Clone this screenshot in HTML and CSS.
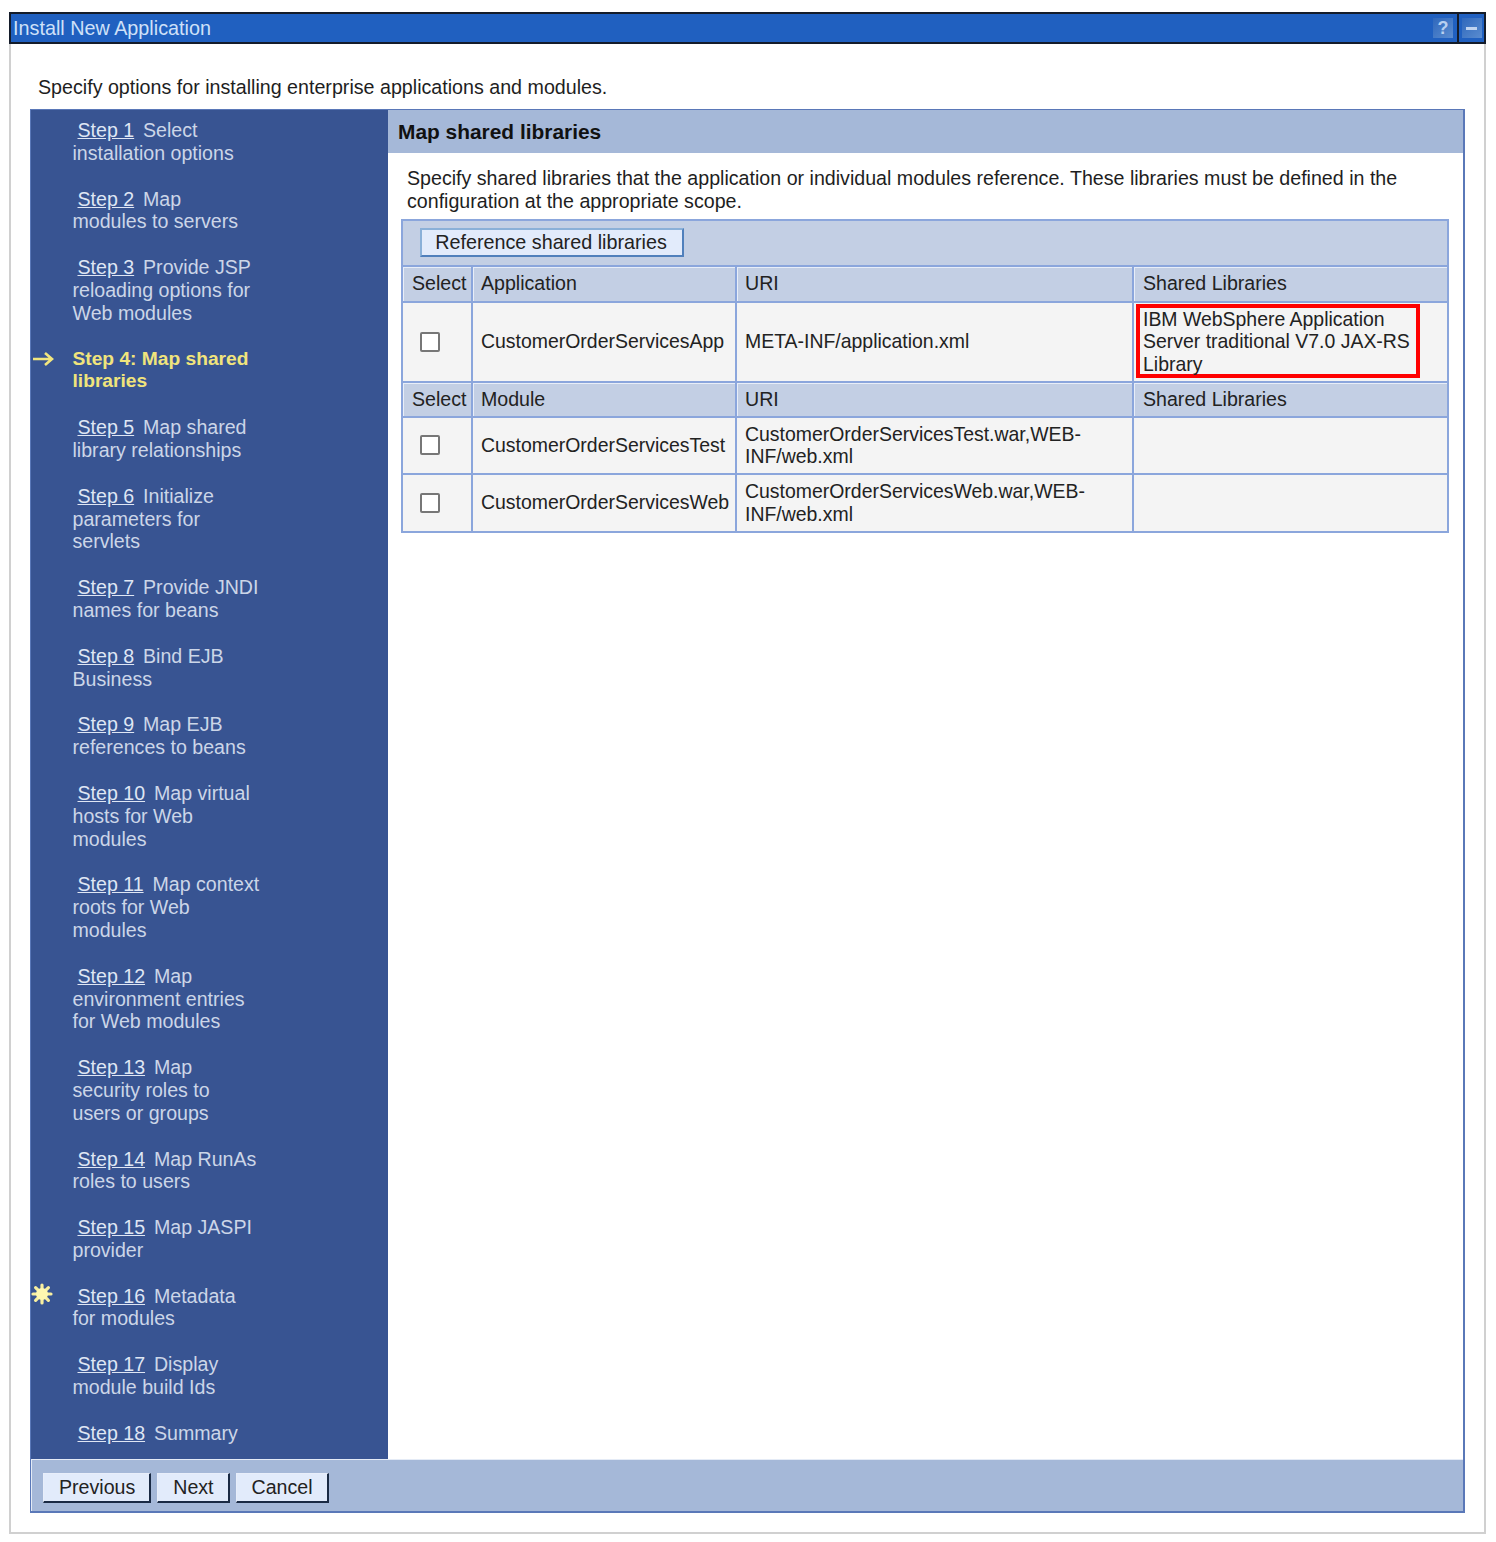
FILE: index.html
```html
<!DOCTYPE html>
<html lang="en">
<head>
<meta charset="utf-8">
<title>Install New Application</title>
<link rel="stylesheet" href="styles.css">
</head>
<body>
<div class="window">
  <div class="titlebar">
    <span class="title-text">Install New Application</span>
    <span class="title-btn-help">?</span>
    <span class="title-sep"><span class="title-btn-min"><i></i></span></span>
  </div>
  <div class="window-body">
    <p class="intro">Specify options for installing enterprise applications and modules.</p>
    <div class="wizard">
      <div class="wizard-main">
        <nav class="nav">
          <div class="step"><a href="#">Step 1</a>&nbsp; Select installation options</div>
          <div class="step"><a href="#">Step 2</a>&nbsp; Map modules to servers</div>
          <div class="step"><a href="#">Step 3</a>&nbsp; Provide JSP reloading options for Web modules</div>
          <div class="step current">
            <svg class="mark-arrow" width="22" height="16" viewBox="0 0 22 16"><path d="M1 8H20M13 2l7 6-7 6" fill="none" stroke="#f2e67e" stroke-width="2.6"/></svg>
            Step 4: Map shared libraries</div>
          <div class="step"><a href="#">Step 5</a>&nbsp; Map shared library relationships</div>
          <div class="step"><a href="#">Step 6</a>&nbsp; Initialize parameters for servlets</div>
          <div class="step"><a href="#">Step 7</a>&nbsp; Provide JNDI names for beans</div>
          <div class="step"><a href="#">Step 8</a>&nbsp; Bind EJB Business</div>
          <div class="step"><a href="#">Step 9</a>&nbsp; Map EJB references to beans</div>
          <div class="step"><a href="#">Step 10</a>&nbsp; Map virtual hosts for Web modules</div>
          <div class="step"><a href="#">Step 11</a>&nbsp; Map context roots for Web modules</div>
          <div class="step"><a href="#">Step 12</a>&nbsp; Map environment entries for Web modules</div>
          <div class="step"><a href="#">Step 13</a>&nbsp; Map security roles to users or groups</div>
          <div class="step"><a href="#">Step 14</a>&nbsp; Map RunAs roles to users</div>
          <div class="step"><a href="#">Step 15</a>&nbsp; Map JASPI provider</div>
          <div class="step">
            <svg class="mark-star" width="24" height="24" viewBox="0 0 24 24"><g stroke="#f8efa0" stroke-width="3.2" stroke-linecap="round"><path d="M12 3v18M3 12h18M5.600 5.600l12.800 12.800M18.400 5.600L5.600 18.400"/></g><circle cx="12" cy="12" r="6" fill="#fff8b0"/></svg>
            <a href="#">Step 16</a>&nbsp; Metadata for modules</div>
          <div class="step"><a href="#">Step 17</a>&nbsp; Display module build Ids</div>
          <div class="step"><a href="#">Step 18</a>&nbsp; Summary</div>
        </nav>
        <main class="panel">
          <h2 class="panel-title">Map shared libraries</h2>
          <div class="panel-body">
            <p class="panel-desc">Specify shared libraries that the application or individual modules reference. These libraries must be defined in the configuration at the appropriate scope.</p>
            <table class="libs">
              <colgroup><col class="c1"><col class="c2"><col class="c3"><col class="c4"></colgroup>
              <tr class="toolbar"><td colspan="4"><button class="ref-btn" type="button">Reference shared libraries</button></td></tr>
              <tr class="head h-app"><th>Select</th><th>Application</th><th>URI</th><th>Shared Libraries</th></tr>
              <tr class="r-app">
                <td class="sel"><span class="check"></span></td>
                <td>CustomerOrderServicesApp</td>
                <td>META-INF/application.xml</td>
                <td class="hl-cell"><div class="highlight">IBM WebSphere Application Server traditional V7.0 JAX-RS Library</div></td>
              </tr>
              <tr class="head h-mod"><th>Select</th><th>Module</th><th>URI</th><th>Shared Libraries</th></tr>
              <tr class="r-mod">
                <td class="sel"><span class="check"></span></td>
                <td>CustomerOrderServicesTest</td>
                <td>CustomerOrderServicesTest.war,WEB-INF/web.xml</td>
                <td></td>
              </tr>
              <tr class="r-mod">
                <td class="sel"><span class="check"></span></td>
                <td>CustomerOrderServicesWeb</td>
                <td>CustomerOrderServicesWeb.war,WEB-INF/web.xml</td>
                <td></td>
              </tr>
            </table>
          </div>
        </main>
      </div>
      <div class="footer">
        <button class="foot-btn" type="button">Previous</button>
        <button class="foot-btn" type="button">Next</button>
        <button class="foot-btn" type="button">Cancel</button>
      </div>
    </div>
  </div>
</div>
</body>
</html>
```
FILE: styles.css
```css
* { box-sizing: border-box; }
html, body { margin: 0; padding: 0; background: #fff; }
body {
  font-family: "Liberation Sans", Arial, sans-serif;
  font-size: 19.6px;
  line-height: 22.8px;
  color: #222;
  padding: 12px 0 0 9px;
}
.window {
  width: 1477px;
  height: 1522px;
  border: 2px solid #d0d0d0;
  border-top: 0;
}
.titlebar {
  height: 32px;
  margin: 0 -2px;
  border: 2px solid #141c2a;
  background: #2060c0;
  color: #cfe0f8;
  display: flex;
  align-items: center;
  padding-left: 2px;
}
.title-text { flex: 1; font-size: 19.8px; }
.title-btn-help {
  width: 20px;
  height: 20px;
  margin-right: 4px;
  background: linear-gradient(135deg, #2f68bc, #5a8cd0);
  color: #b8d0f0;
  font-weight: bold;
  font-size: 18px;
  line-height: 20px;
  text-align: center;
}
.title-sep {
  height: 100%;
  width: 27px;
  border-left: 2px solid #141c2a;
  display: flex;
  align-items: center;
  justify-content: center;
}
.title-btn-min {
  width: 20px;
  height: 20px;
  background: linear-gradient(135deg, #2f68bc, #5a8cd0);
  display: flex;
  align-items: center;
  justify-content: center;
}
.title-btn-min i { display: block; width: 11px; height: 3px; background: #c0d4f0; }
.window-body { padding: 32px 19px 0 19px; }
.intro { margin: 0 0 10px 8px; height: 23px; color: #1e1e1e; font-size: 19.67px; }
.wizard {
  width: 1435px;
  height: 1404px;
  border: 2px solid #5a78b8;
  border-left-width: 1px;
  border-top-width: 1px;
  display: flex;
  flex-direction: column;
  background: #385492;
}
.wizard-main { display: flex; flex: 1; min-height: 0; }
.nav {
  width: 357px;
  padding: 9px 0 0 41.5px;
  background: #385492;
  color: #ccd6e8;
  flex: none;
}
.step { position: relative; width: 187.5px; margin-bottom: 23px; }
.step:last-child { margin-bottom: 0; }
.step a { color: #dfe6f4; margin: 0 -2px 0 5px; text-decoration: underline; }
.step.current { color: #f0e47c; font-weight: bold; font-size: 19.2px; }
.mark-arrow { position: absolute; left: -41px; top: 3px; }
.mark-star { position: absolute; left: -43px; top: -3px; }
.panel { flex: 1; background: #fff; min-width: 0; }
.panel-title {
  margin: 0;
  height: 43px;
  padding-left: 10px;
  background: #a5b8d8;
  color: #111;
  font-size: 20.9px;
  line-height: 44px;
  font-weight: bold;
}
.panel-body { padding: 14px 15px 0 13px; }
.panel-desc { margin: 0 0 6px 6px; color: #1e1e1e; font-size: 19.64px; }
.libs {
  width: 1046px;
  table-layout: fixed;
  border-collapse: collapse;
  border: 2px solid #8ba6dc;
}
.c1 { width: 70px; }
.c2 { width: 264px; }
.c3 { width: 397px; }
.c4 { width: 315px; }
.libs td, .libs th {
  border: 2px solid #8ba6dc;
  padding: 0 0 0 8px;
  font-weight: normal;
  text-align: left;
  background: #f4f4f4;
  color: #222;
  white-space: normal;
}
.libs td { font-size: 19.45px; }
.libs th { background: #c3cfe4; box-shadow: inset 1px 1px 0 #e8eef8; }
.libs th:first-child, .libs th:last-child { padding-left: 9px; }
.toolbar td { height: 46px; }
.libs .toolbar td { background: #c3cfe4; padding-left: 17px; }
.ref-btn {
  font: inherit;
  font-size: 19.75px;
  color: #222;
  height: 29px;
  width: 264px;
  padding: 0 2px 0 0;
  background: #e2ebfb;
  border: 2px solid #5080bc;
  border-top-color: #8ab0d8;
  border-left-color: #8ab0d8;
}
.h-app th { height: 36px; }
.r-app td { height: 80px; }
.h-mod th { height: 35px; }
.r-mod td { height: 57.5px; }
.libs .sel { padding: 0 0 0 17px; }
.check {
  display: block;
  width: 20px;
  height: 20px;
  background: #fff;
  border: 2px solid #777;
  border-radius: 2px;
}
.libs .hl-cell { padding: 0 0 2px 2px; vertical-align: middle; }
.highlight {
  width: 284px;
  height: 74px;
  border: 4px solid #f00;
  padding: 0 0 0 3px;
  line-height: 22.6px;
}
.footer {
  height: 52px;
  flex: none;
  background: #a5b8d8;
  border-top: 1px solid #e4ebf6;
  border-left: 1px solid #e4ebf6;
  padding: 13px 0 0 11px;
  display: flex;
  gap: 6px;
  align-items: flex-start;
}
.foot-btn {
  font: inherit;
  color: #222;
  height: 30px;
  padding: 0 14px 0 15px;
  background: #e2ebfb;
  border: 1px solid #e8eefa;
  border-right: 2px solid #1a2a44;
  border-bottom: 2px solid #1a2a44;
}
```
